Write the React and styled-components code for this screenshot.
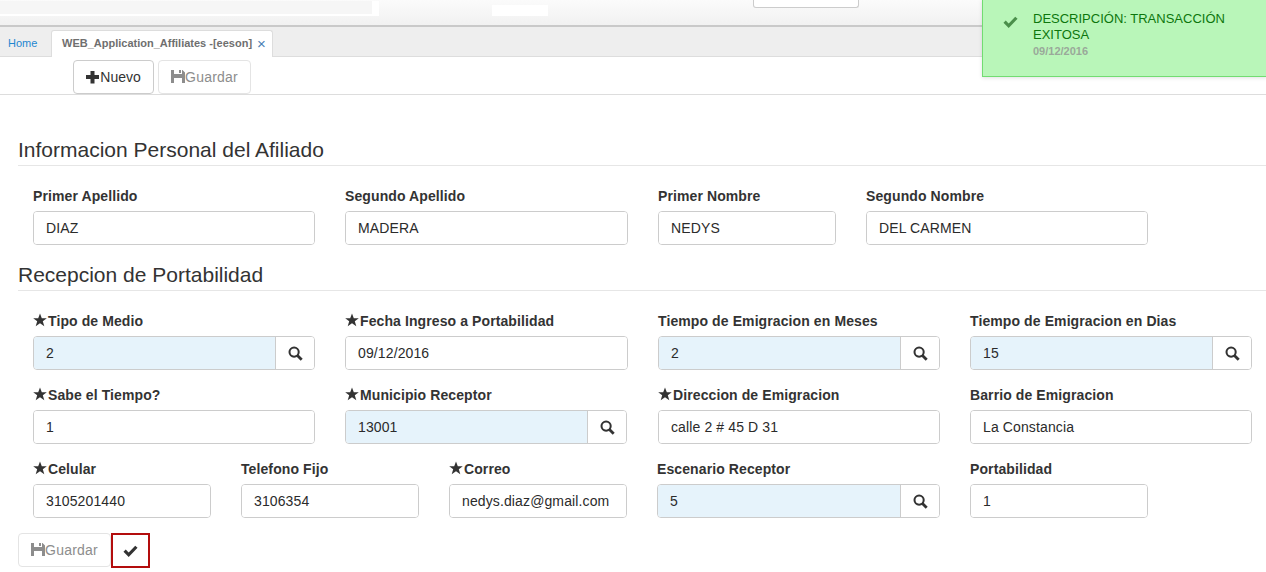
import styled, { createGlobalStyle } from "styled-components";

const GlobalStyle = createGlobalStyle`
  html, body {
    margin: 0;
    padding: 0;
    background: #fff;
    font-family: "Liberation Sans", Arial, sans-serif;
    color: #333;
  }
`;

const Page = styled.div`
  position: relative;
  width: 1266px;
  height: 572px;
  overflow: hidden;
`;

const TopBar = styled.div`
  height: 25px;
  display: flex;
  align-items: flex-start;
  background: linear-gradient(to bottom, #fbfbfb, #f1f1f1);
  border-bottom: 2px solid #c9c9c9;
`;

const SearchStub = styled.div`
  width: 372px;
  height: 13px;
  margin-top: 1px;
  background: #f6f6f6;
  border-bottom: 2px solid #fff;
  border-right: 7px solid #fff;
`;

const LogoStub = styled.div`
  width: 56px;
  height: 11px;
  margin: 5px 0 0 113px;
  background: #fff;
`;

const MenuStub = styled.div`
  width: 104px;
  height: 7px;
  margin-left: 205px;
  background: #fff;
  border: 1px solid #ccc;
  border-top: none;
  border-radius: 0 0 3px 3px;
`;

const TabBar = styled.div`
  height: 29px;
  display: flex;
  align-items: flex-end;
  background: #eee;
  border-bottom: 1px solid #ddd;
`;

const HomeTab = styled.a`
  width: 51px;
  height: 27px;
  box-sizing: border-box;
  padding: 7px 0 0 8px;
  font-size: 11px;
  line-height: 15px;
  color: #1f87d0;
`;

const ActiveTab = styled.div`
  width: 222px;
  height: 27px;
  box-sizing: border-box;
  margin-bottom: -1px;
  padding: 5px 0 0 10px;
  display: flex;
  gap: 5px;
  background: #fff;
  border: 1px solid #ddd;
  border-bottom: none;
  border-radius: 3px 3px 0 0;
  font-size: 11px;
  line-height: 15px;
  font-weight: bold;
  color: #6f6f6f;
`;

const CloseMark = styled.span`
  font-size: 15px;
  font-weight: normal;
  color: #4a7fb5;
`;

const Toolbar = styled.div`
  height: 38px;
  padding: 3px 0 0 73px;
  box-sizing: border-box;
  display: flex;
  gap: 4px;
  border-bottom: 1px solid #ddd;
`;

const ToolButton = styled.button`
  width: ${(p) => p.$w}px;
  height: 34px;
  padding: 0;
  display: inline-flex;
  align-items: center;
  justify-content: center;
  background: #fff;
  border: 1px solid ${(p) => (p.disabled ? "#e4e4e4" : "#ccc")};
  border-radius: 4px;
  font-family: inherit;
  font-size: 14px;
  letter-spacing: ${(p) => (p.disabled ? "0.2px" : "0")};
  color: ${(p) => (p.disabled ? "#8d8d8d" : "#333")};
`;

const Content = styled.div`
  padding: 40px 0 0 18px;
`;

const SectionTitle = styled.h2`
  height: 31px;
  box-sizing: border-box;
  margin: 0 0 20px;
  padding-top: 3px;
  font-size: 21px;
  line-height: 24px;
  font-weight: 400;
  color: #333;
  border-bottom: 1px solid #e6e6e6;
`;

const Row = styled.div`
  display: flex;
  gap: 30px;
  padding-left: 15px;
  margin-bottom: 15px;
`;

const Field = styled.div`
  width: ${(p) => p.$w}px;
  margin-right: ${(p) => p.$trail || 0}px;
`;

const Label = styled.label`
  height: 20px;
  margin-bottom: 5px;
  display: flex;
  align-items: center;
  font-size: 14px;
  line-height: 20px;
  font-weight: bold;
  letter-spacing: 0.1px;
  color: #333;
  white-space: nowrap;
`;

const Control = styled.div`
  height: 34px;
  box-sizing: border-box;
  display: flex;
  background: #fff;
  border: 1px solid #ccc;
  border-radius: 4px;
  overflow: hidden;
`;

const Value = styled.div`
  flex: 1;
  padding-left: 12px;
  font-size: 14px;
  line-height: 32px;
  letter-spacing: 0.12px;
  color: #2b2b2b;
  background: ${(p) => (p.$lookup ? "#e6f3fb" : "#fff")};
`;

const LookupButton = styled.div`
  width: 39px;
  box-sizing: border-box;
  display: flex;
  align-items: center;
  justify-content: center;
  border-left: 1px solid #ccc;
  background: #fff;
`;

const Actions = styled.div`
  display: flex;
  align-items: flex-start;
`;

const OkButton = styled.button`
  width: 39px;
  height: 35px;
  padding: 0;
  display: inline-flex;
  align-items: center;
  justify-content: center;
  background: #fff;
  border: 2px solid #b30d0d;
`;

const Toast = styled.div`
  position: absolute;
  top: -1px;
  right: -1px;
  width: 285px;
  height: 78px;
  box-sizing: border-box;
  padding: 11px 16px 0 20px;
  display: flex;
  gap: 15px;
  background: #b9f6b9;
  border: 1px solid #72dc72;
  box-shadow: 0 1px 4px rgba(0, 0, 0, 0.12);
`;

const ToastIcon = styled.div`
  padding-top: 3px;
  height: 14px;
`;

const ToastText = styled.div`
  font-size: 13px;
  line-height: 16px;
  color: #0d760d;
`;

const ToastDate = styled.div`
  margin-top: 1px;
  font-size: 11px;
  line-height: 14px;
  font-weight: bold;
  color: #9aa99a;
`;

const PlusIcon = () => (
  <svg width="14" height="14" viewBox="0.5 0 14 14" fill="#333">
    <path d="M5 1h4v4h4.500v4H9v4.500H5V9H.5V5H5z" />
  </svg>
);

const SaveIcon = () => (
  <svg width="14" height="14" viewBox="0 0 14 14" fill="#8d8d8d">
    <path d="M0 0h3v4h8V0h.5L14 2.500V13H11V8H3V13H0zM8 0h2v3H8z" />
  </svg>
);

const StarIcon = () => (
  <svg width="14" height="14" viewBox="0 0 14 14" fill="#333" style={{ flex: "none", marginTop: -3, marginRight: 1 }}>
    <path d="M7 .5l1.800 4.700h5l-4 3 1.500 5L7 10.300l-4.300 2.900 1.500-5-4-3h5z" />
  </svg>
);

const SearchIcon = () => (
  <svg width="15" height="15" viewBox="0 0 14 14" fill="none" stroke="#333">
    <circle cx="5.700" cy="5.700" r="4.300" strokeWidth="1.900" />
    <path d="M8.800 8.800l4 4" strokeWidth="2.600" />
  </svg>
);

const CheckIcon = ({ color, size }) => (
  <svg width={size} height={size} viewBox="0 0 14 14" fill="none" stroke={color}>
    <path d="M1.500 7.200l3.800 3.800 7.200-7.500" strokeWidth="3" />
  </svg>
);

const sections = [
  {
    title: "Informacion Personal del Afiliado",
    rows: [
      [
        { label: "Primer Apellido", value: "DIAZ", w: 282 },
        { label: "Segundo Apellido", value: "MADERA", w: 283 },
        { label: "Primer Nombre", value: "NEDYS", w: 178 },
        { label: "Segundo Nombre", value: "DEL CARMEN", w: 282 },
      ],
    ],
  },
  {
    title: "Recepcion de Portabilidad",
    rows: [
      [
        { label: "Tipo de Medio", value: "2", w: 282, star: true, lookup: true },
        { label: "Fecha Ingreso a Portabilidad", value: "09/12/2016", w: 283, star: true },
        { label: "Tiempo de Emigracion en Meses", value: "2", w: 282, lookup: true },
        { label: "Tiempo de Emigracion en Dias", value: "15", w: 282, lookup: true },
      ],
      [
        { label: "Sabe el Tiempo?", value: "1", w: 282, star: true },
        { label: "Municipio Receptor", value: "13001", w: 282, star: true, lookup: true, trail: 1 },
        { label: "Direccion de Emigracion", value: "calle 2 # 45 D 31", w: 282, star: true },
        { label: "Barrio de Emigracion", value: "La Constancia", w: 282 },
      ],
      [
        { label: "Celular", value: "3105201440", w: 178, star: true },
        { label: "Telefono Fijo", value: "3106354", w: 178 },
        { label: "Correo", value: "nedys.diaz@gmail.com", w: 178, star: true },
        { label: "Escenario Receptor", value: "5", w: 283, lookup: true },
        { label: "Portabilidad", value: "1", w: 178 },
      ],
    ],
  },
];

const App = () => {
  return (
    <Page>
      <GlobalStyle />
      <TopBar>
        <SearchStub />
        <LogoStub />
        <MenuStub />
      </TopBar>
      <TabBar>
        <HomeTab>Home</HomeTab>
        <ActiveTab>
          WEB_Application_Affiliates -[eeson]
          <CloseMark>×</CloseMark>
        </ActiveTab>
      </TabBar>
      <Toolbar>
        <ToolButton $w={81}>
          <PlusIcon />
          Nuevo
        </ToolButton>
        <ToolButton $w={93} disabled>
          <SaveIcon />
          Guardar
        </ToolButton>
      </Toolbar>
      <Content>
        {sections.map((section) => (
          <div key={section.title}>
            <SectionTitle>{section.title}</SectionTitle>
            {section.rows.map((row) => (
              <Row key={row[0].label}>
                {row.map((f) => (
                  <Field key={f.label} $w={f.w} $trail={f.trail}>
                    <Label>
                      {f.star && <StarIcon />}
                      {f.label}
                    </Label>
                    <Control>
                      <Value $lookup={f.lookup}>{f.value}</Value>
                      {f.lookup && (
                        <LookupButton>
                          <SearchIcon />
                        </LookupButton>
                      )}
                    </Control>
                  </Field>
                ))}
              </Row>
            ))}
          </div>
        ))}
        <Actions>
          <ToolButton $w={93} disabled>
            <SaveIcon />
            Guardar
          </ToolButton>
          <OkButton>
            <CheckIcon color="#333" size={15} />
          </OkButton>
        </Actions>
      </Content>
      <Toast>
        <ToastIcon>
          <CheckIcon color="#4b8f4b" size={15} />
        </ToastIcon>
        <ToastText>
          DESCRIPCIÓN: TRANSACCIÓN EXITOSA
          <ToastDate>09/12/2016</ToastDate>
        </ToastText>
      </Toast>
    </Page>
  );
};

export default App;
